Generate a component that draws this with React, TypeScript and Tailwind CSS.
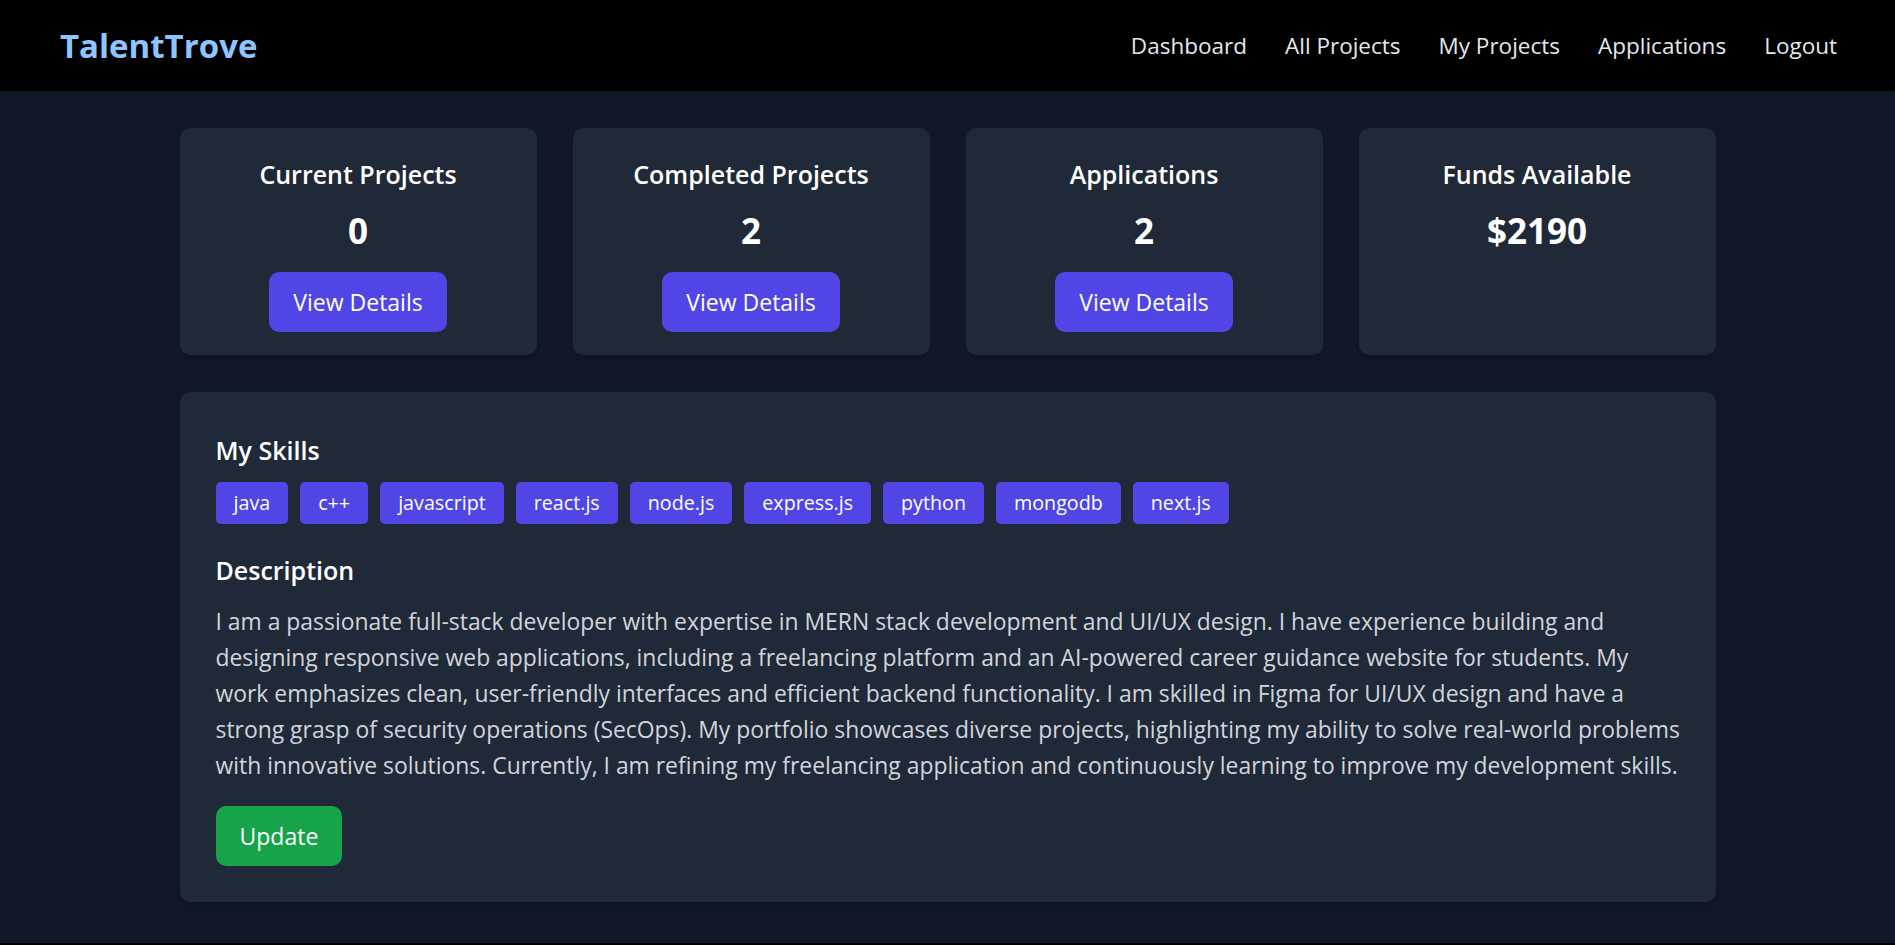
import React from 'react';

const font = { fontFamily: '"Open Sans", "Noto Sans", sans-serif' };

const navLinks = ['Dashboard', 'All Projects', 'My Projects', 'Applications', 'Logout'];

const stats = [
  { title: 'Current Projects', value: '0', action: true },
  { title: 'Completed Projects', value: '2', action: true },
  { title: 'Applications', value: '2', action: true },
  { title: 'Funds Available', value: '$2190', action: false },
];

const skills = ['java', 'c++', 'javascript', 'react.js', 'node.js', 'express.js', 'python', 'mongodb', 'next.js'];

const descriptionLines = [
  'I am a passionate full-stack developer with expertise in MERN stack development and UI/UX design. I have experience building and',
  'designing responsive web applications, including a freelancing platform and an AI-powered career guidance website for students. My',
  'work emphasizes clean, user-friendly interfaces and efficient backend functionality. I am skilled in Figma for UI/UX design and have a',
  'strong grasp of security operations (SecOps). My portfolio showcases diverse projects, highlighting my ability to solve real-world problems',
  'with innovative solutions. Currently, I am refining my freelancing application and continuously learning to improve my development skills.',
];

const Navbar: React.FC = () => (
  <nav className="h-[91px] bg-black flex items-center justify-between pl-[60px] pr-[58px]">
    <span className="text-[33px] font-bold text-[#8ec5ff]">TalentTrove</span>
    <div className="flex items-center gap-[38px]">
      {navLinks.map((link) => (
        <a key={link} href="#" className="text-[22.5px] text-[#e5e7eb]">
          {link}
        </a>
      ))}
    </div>
  </nav>
);

const StatCard: React.FC<{ title: string; value: string; action: boolean }> = ({ title, value, action }) => (
  <div className="bg-[#1f2937] rounded-[10px] shadow-md flex flex-col items-center pt-[28px] pb-[23px]">
    <h3 className="text-[25px] leading-[37px] font-semibold text-white">{title}</h3>
    <p className="mt-[18px] text-[35px] leading-[40px] font-bold text-white">{value}</p>
    {action && (
      <button className="mt-[21px] h-[60px] px-[24px] rounded-[10px] bg-[#4f46e5] text-white text-[23px]">
        View Details
      </button>
    )}
  </div>
);

export default function App() {
  return (
    <div className="min-h-screen bg-black" style={font}>
      <Navbar />
      <main className="h-[852px] bg-[#111827] pt-[37px]">
        <div className="max-w-[1536px] mx-auto">
          <div className="grid grid-cols-4 gap-[36px]">
            {stats.map((s) => (
              <StatCard key={s.title} {...s} />
            ))}
          </div>

          <section className="mt-[37px] bg-[#1f2937] rounded-[10px] shadow-md px-[36px] pt-[40px] pb-[36px]">
            <h2 className="text-[25px] leading-[37px] font-semibold text-white">My Skills</h2>
            <div className="mt-[13px] flex flex-wrap gap-3">
              {skills.map((skill) => (
                <span
                  key={skill}
                  className="h-[42px] px-[18px] flex items-center rounded-[5px] bg-[#4f46e5] text-white text-[19.7px]"
                >
                  {skill}
                </span>
              ))}
            </div>

            <h2 className="mt-[28px] text-[25px] leading-[37px] font-semibold text-white">Description</h2>
            <p className="mt-[15px] text-[22.9px] leading-[36px] text-[#d1d5db] whitespace-nowrap">
              {descriptionLines.map((line, i) => (
                <React.Fragment key={i}>
                  {line}
                  {i < descriptionLines.length - 1 && <br />}
                </React.Fragment>
              ))}
            </p>

            <button className="mt-[22px] h-[60px] px-[24px] rounded-[10px] bg-[#16a34a] text-white text-[23px]">
              Update
            </button>
          </section>
        </div>
      </main>
    </div>
  );
}
